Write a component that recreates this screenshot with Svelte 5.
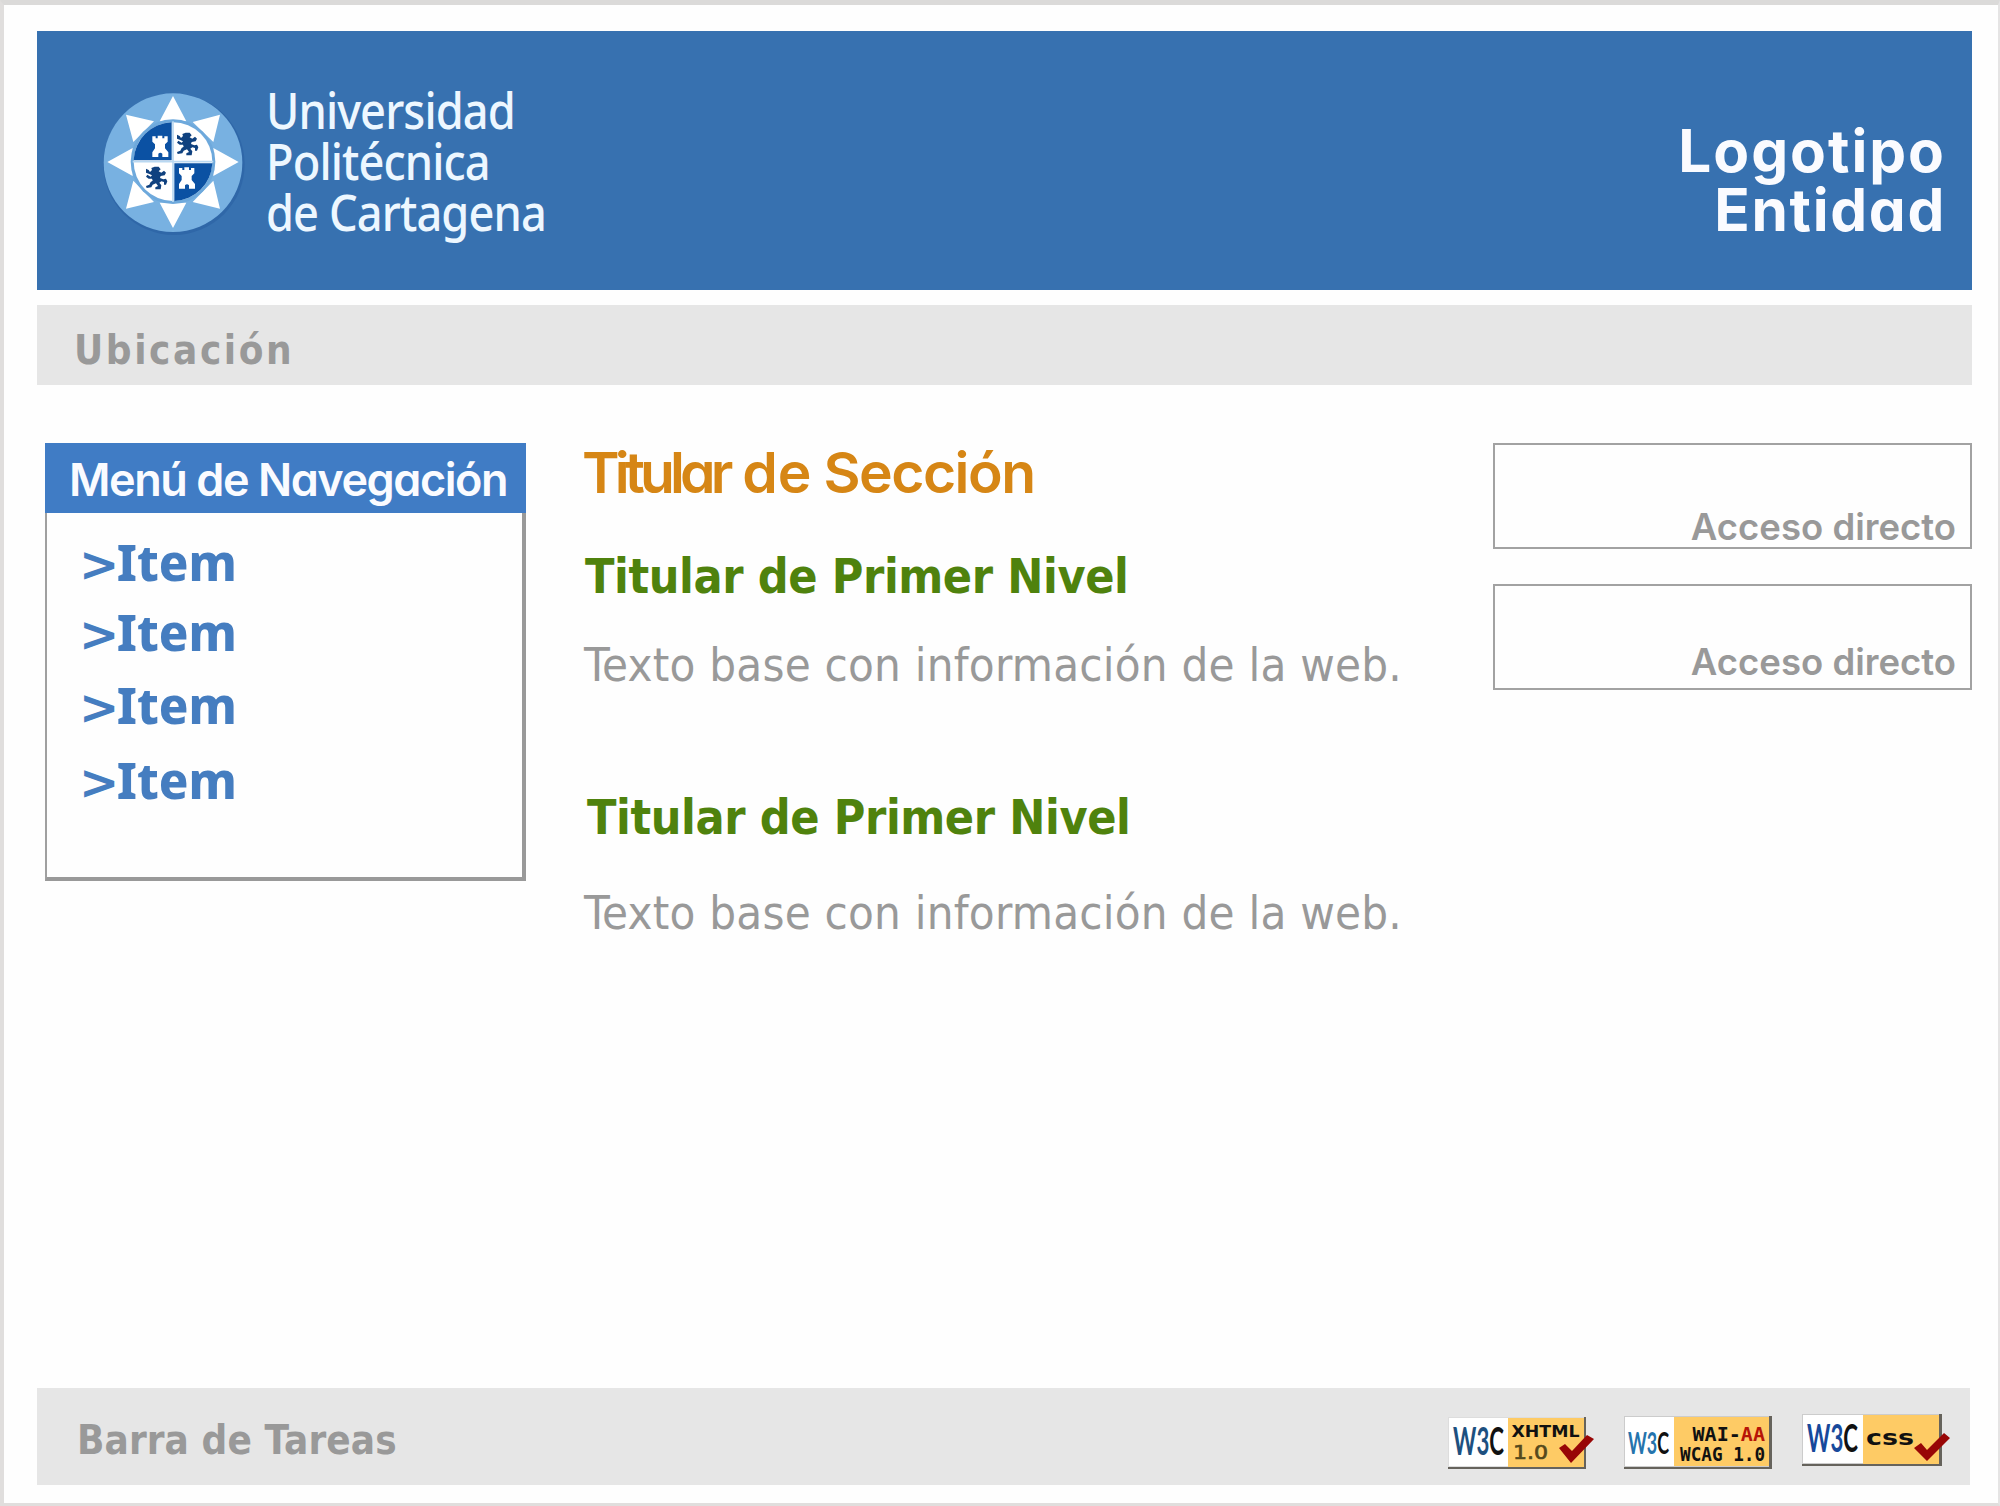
<script>
  const items = [70, 73, 75, 74];
  const castle = 'M-24-30h10v6h6v-8h14v8h6v-6h10v16l-8 8v12l10 12v14h-18v-10q-6-6-12 0v10h-18v-14l8-12v-12l-8-8z';
  const lion = 'M-30-32l8 4 4 6 6-6-2-6 10-4 12 0 6 8-6 6 8 4 8-6 6 6-4 8-12 2-2 6 10 4 8-2 4 8-4 10-6 0 0-8-8-2-6 4 6 8-2 12-16 0 0-6 8-4-6-8-10 4-4 8-14 2-2-6 10-4 4-8 6-4-2-6-10 0-8-6 4-6 10 6 4-4-8-4-10-4z';
</script>

<div class="page">
  <header>
    <div class="brand">
      <svg class="emblem" viewBox="0 0 510 495" aria-hidden="true">
        <circle cx="252" cy="253" r="212" fill="#2f67a8" />
        <circle cx="249" cy="248" r="208" fill="#78b1e1" />
        <g fill="#fff">
          <path d="M249 48l40 76h-80zM249 444l40-76h-80zM52 246l76-42v84zM446 246l-76-42v84z" />
          <path d="M108 104l84 20-62 62zM390 104l-20 82-62-60zM108 386l22-84 62 64zM390 386l-82-20 62-64z" />
        </g>
        <circle cx="249" cy="245" r="127" fill="#6ea9dc" />
        <circle cx="249" cy="245" r="118" fill="#fff" />
        <path d="M245 241V127A118 118 0 0 0 131 241zM253 250V363A118 118 0 0 0 367 250z" fill="#0b51a3" />
        <path d="M249 124v242M128 245h242" stroke="#b9d8f1" stroke-width="5" />
        <g fill="#fff">
          <path d={castle} transform="translate(211 199)" />
          <path d={castle} transform="translate(291 294)" />
        </g>
        <g fill="#0f417f">
          <path d={lion} transform="translate(291 196)" />
          <path d={lion} transform="translate(198 298)" />
        </g>
      </svg>
      <div class="uni">Universidad<br />Politécnica<br />de Cartagena</div>
    </div>
    <div class="entity"><span class="l1">Logotipo</span><span class="l2">Entidad</span></div>
  </header>

  <div class="location"><span>Ubicación</span></div>

  <div class="columns">
    <nav>
      <h2><span>Menú de Navegación</span></h2>
      <ul>
        {#each items as height}
          <li style="height: {height}px"><span class="chevron">&gt;</span>Item</li>
        {/each}
      </ul>
    </nav>
    <main>
      <h1><span class="tight">Titular</span> <span class="de">de</span> Sección</h1>
      <section>
        <h3>Titular de Primer Nivel</h3>
        <p>Texto base con información de la web.</p>
      </section>
      <section class="second">
        <h3>Titular de Primer Nivel</h3>
        <p>Texto base con información de la web.</p>
      </section>
    </main>
    <aside>
      <div class="shortcut one"><span>Acceso directo</span></div>
      <div class="shortcut two"><span>Acceso directo</span></div>
    </aside>
  </div>

  <footer>
    <span class="bar">Barra de Tareas</span>
    <svg class="badge xhtml" viewBox="0 0 148 56">
      <rect width="138" height="52" fill="#66635c" /><rect width="136" height="50" fill="#ddd" />
      <rect x="1" y="1" width="60" height="48" fill="#fff" /><rect x="60" y="1" width="76" height="49" fill="#fecb65" />
      <text x="5" y="38" class="w3" textLength="51" lengthAdjust="spacingAndGlyphs"><tspan class="navy">W3</tspan>C</text>
      <text x="63.5" y="20" class="wide" font-size="15.5" textLength="68" lengthAdjust="spacingAndGlyphs">XHTML</text>
      <text x="65" y="42" class="num" textLength="35" lengthAdjust="spacingAndGlyphs">1.0</text>
      <path d="M111 31l6-4 7 7 15-16 7 4-23 24z" fill="#980606" />
    </svg>
    <svg class="badge wai" viewBox="0 0 148 56">
      <rect width="148" height="53" fill="#66635c" /><rect width="145" height="51" fill="#ccc" />
      <rect x="1" y="1" width="50" height="49" fill="#fff" /><rect x="50" y="1" width="95" height="49" fill="#fecb65" />
      <text x="4" y="38" class="w3 small" textLength="41" lengthAdjust="spacingAndGlyphs"><tspan class="sky">W3</tspan>C</text>
      <text x="68.5" y="25" class="mono" textLength="72.5" lengthAdjust="spacingAndGlyphs">WAI-<tspan class="red">AA</tspan></text>
      <text x="56" y="45" class="mono" textLength="85" lengthAdjust="spacingAndGlyphs">WCAG 1.0</text>
    </svg>
    <svg class="badge css" viewBox="0 0 148 56">
      <rect width="140" height="52" fill="#66635c" /><rect width="137" height="50" fill="#ccc" />
      <rect x="1" y="1" width="61" height="48" fill="#fff" /><rect x="61" y="1" width="76" height="49" fill="#fecb65" />
      <text x="5" y="38" class="w3" textLength="51" lengthAdjust="spacingAndGlyphs"><tspan class="royal">W3</tspan>C</text>
      <text x="64" y="31" class="wide" font-size="21" textLength="48" lengthAdjust="spacingAndGlyphs">css</text>
      <path d="M112 34l7-5 6 7 17-17 6 5-23 23z" fill="#980606" />
    </svg>
  </footer>
</div>

<style>
  :global(body) { background: #fefefe; }
  .page {
    box-sizing: border-box;
    width: 2000px;
    height: 1506px;
    overflow: hidden;
    padding: 25px 26px 0 33px;
    border: 4px solid #e0dedd;
    border-top: 5px solid #dbdad9;
    border-right: 2px solid #e5e4e4;
    border-bottom-width: 3px;
    background: #fefefe;
    white-space: nowrap;
    font-family: 'DejaVu Sans Condensed', 'DejaVu Sans', sans-serif;
    font-stretch: condensed;
    display: flex;
    flex-direction: column;
  }
  h1, h2, h3, p, ul { margin: 0; padding: 0; list-style: none; }

  header {
    flex: none;
    box-sizing: border-box;
    height: 259px;
    margin-top: 1px;
    background: #3771b0;
    display: flex;
    justify-content: space-between;
    padding: 49px 29px 0 53px;
  }
  .brand { display: flex; gap: 6px; }
  .emblem { width: 170px; height: 165px; flex: none; }
  .uni {
    padding-top: 5px;
    font: 500 50px/51px 'Noto Sans', sans-serif;
    color: #edf7ff;
    letter-spacing: -1px;
    transform: scaleX(.904);
    transform-origin: left;
  }
  .entity {
    display: flex;
    flex-direction: column;
    align-items: flex-end;
    padding-top: 42px;
    font: 700 58.5px/58.5px Inter, sans-serif;
    font-feature-settings: 'cv11';
    color: #fafbff;
  }
  .l1 { letter-spacing: 2px; margin-right: -3px; }
  .l2 { letter-spacing: 1.7px; margin-right: -3px; }

  .location {
    flex: none;
    height: 80px;
    margin-top: 15px;
    padding-left: 37px;
    background: #e6e6e6;
    color: #999;
    font-size: 40px;
    font-weight: 700;
    line-height: 90px;
    letter-spacing: 2.6px;
  }

  .columns { flex: none; display: flex; height: 1003px; padding: 58px 0 0 8px; box-sizing: border-box; }
  nav {
    box-sizing: border-box;
    width: 481px;
    height: 438px;
    border: 2px solid #a0a0a0;
    border-right: 4px solid #999;
    border-bottom: 4px solid #999;
    border-top: 0;
  }
  h2 {
    height: 70px;
    margin: 0 -4px 0 -2px;
    padding-left: 24px;
    background: #407cc5;
    color: #fafbff;
    font: 600 45px/74px Inter, sans-serif;
    font-feature-settings: 'cv11';
    letter-spacing: -1.45px;
  }
  ul { padding: 14px 0 0 32px; }
  li {
    font: 800 49px/70px 'Noto Sans', sans-serif;
    color: #457dc0;
    letter-spacing: 0;
  }
  .chevron { font: 700 48px/60px 'DejaVu Sans', sans-serif; letter-spacing: -2.5px; }
  main { width: 909px; margin-left: 58px; }
  h1 {
    height: 100px;
    color: #d68615;
    font: 600 57px/60px Inter, sans-serif;
    font-feature-settings: 'cv11';
    letter-spacing: -1.5px;
    margin-left: -2px;
  }
  .tight { letter-spacing: -4.9px; }
  .de { letter-spacing: 0; margin-left: 1px; margin-right: -1px; }
  h3 { height: 90px; padding-left: 1px; color: #4f820d; font-size: 48px; font-weight: 700; line-height: 66px; letter-spacing: -.4px; }
  p { color: #999; font-size: 47px; line-height: 64px; letter-spacing: .22px; }
  .second { padding: 87px 0 0 2px; }
  .second h3 { height: 97px; }
  .second p { margin-left: -2px; }
  .shortcut {
    box-sizing: border-box;
    width: 479px;
    height: 106px;
    border: 2px solid #a2a2a2;
    display: flex;
    justify-content: flex-end;
    align-items: flex-end;
    padding-right: 14px;
    color: #999;
    font: 600 36.5px/40px Inter, sans-serif;
    font-feature-settings: 'cv11';
    letter-spacing: 0;
  }
  .two { margin-top: 35px; padding-bottom: 6px; }

  footer {
    flex: none;
    height: 97px;
    width: 1933px;
    background: #e6e6e6;
    display: flex;
    align-items: flex-start;
  }
  .bar { width: 1371px; padding-left: 40px; color: #999; font-size: 40px; font-weight: 700; line-height: 104px; letter-spacing: .1px; }
  .badge { width: 148px; height: 56px; flex: none; overflow: visible; }
  .xhtml { margin-top: 29px; }
  .wai { margin: 28px 0 0 28px; }
  .css { margin: 26px 0 0 30px; }
  text { fill: #111; }
  .w3 { font: 700 38px Lato, sans-serif; }
  .w3.small { font-size: 30px; }
  .navy { fill: #1d507f; }
  .sky { fill: #2574ad; }
  .royal { fill: #17499b; }
  .red { fill: #b71507; }
  .wide { font-family: 'DejaVu Sans', sans-serif; font-weight: 700; }
  .num { font: 400 19px 'DejaVu Sans', sans-serif; fill: #55491c; stroke: #55491c; stroke-width: .7; }
  .mono { font: 700 20px 'DejaVu Sans Mono', monospace; }
</style>
